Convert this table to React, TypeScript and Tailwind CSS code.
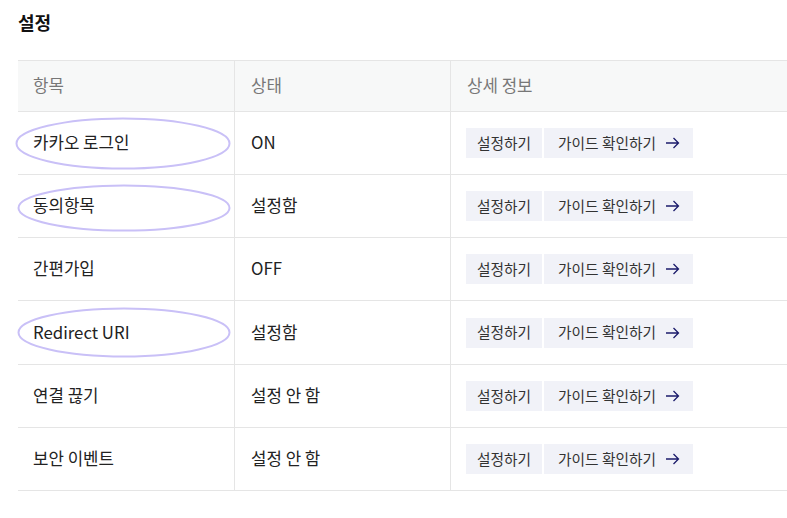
import React from "react";

type Row = {
  name: string;
  status: string;
  tall?: boolean;
  ring?: { left: number; top: number; width: number; height: number };
};

const ROWS: Row[] = [
  { name: "카카오 로그인", status: "ON", ring: { left: -3, top: 5, width: 216, height: 53 } },
  { name: "동의항목", status: "설정함", ring: { left: -1, top: 9, width: 214, height: 48 } },
  { name: "간편가입", status: "OFF" },
  { name: "Redirect URI", status: "설정함", tall: true, ring: { left: -1, top: 6, width: 214, height: 51 } },
  { name: "연결 끊기", status: "설정 안 함" },
  { name: "보안 이벤트", status: "설정 안 함" },
];

function Ring({ left, top, width, height }: NonNullable<Row["ring"]>) {
  return (
    <svg
      className="pointer-events-none absolute"
      style={{ left, top, width, height }}
      viewBox={`0 0 ${width} ${height}`}
    >
      <ellipse
        cx={width / 2}
        cy={height / 2}
        rx={width / 2 - 1.5}
        ry={height / 2 - 1.5}
        fill="none"
        stroke="#c9c0f7"
        strokeWidth="2"
      />
    </svg>
  );
}

export default function App() {
  return (
    <div
      className="min-h-screen bg-white pl-[18px] pt-[9px] text-[#222]"
      style={{ fontFamily: '"Noto Sans CJK KR", "Noto Sans", sans-serif' }}
    >
      <h1 className="text-[18px] font-bold leading-[27px] text-[#111]">설정</h1>

      <div className="mt-[24px] w-[800px]">
        <div className="grid grid-cols-[216px_216px_1fr] border-y border-[#e5e5e5] bg-[#f7f8f8] text-[16.8px] text-[#777]">
          <div className="flex h-[50px] items-center pl-[15px]">항목</div>
          <div className="flex h-[50px] items-center border-l border-[#e5e5e5] pl-[16px]">상태</div>
          <div className="flex h-[50px] items-center border-l border-[#e5e5e5] pl-[16px]">상세 정보</div>
        </div>

        {ROWS.map((r) => (
          <div
            key={r.name}
            className={`grid grid-cols-[216px_216px_1fr] border-b border-[#e5e5e5] text-[16.8px] ${r.tall ? "h-[64px]" : "h-[63px]"}`}
          >
            <div className="relative flex items-center pl-[15px]">
              {r.ring && <Ring {...r.ring} />}
              <span className="relative">{r.name}</span>
            </div>
            <div className="flex items-center border-l border-[#e5e5e5] pl-[16px]">
              {r.status}
            </div>
            <div className="flex items-center gap-[2px] border-l border-[#e5e5e5] pl-[15px] text-[14.7px] text-[#333]">
              <button className="h-[30px] bg-[#f1f2f8] px-[11px]">설정하기</button>
              <button className="flex h-[30px] items-center gap-[9px] bg-[#f1f2f8] pl-[14px] pr-[13px]">
                가이드 확인하기
                <svg width="15" height="12" viewBox="0 0 15 12" fill="none" stroke="#1b1b6b" strokeWidth="1.3">
                  <path d="M1 6h12.5M8.5 1l5 5-5 5" />
                </svg>
              </button>
            </div>
          </div>
        ))}
      </div>
    </div>
  );
}
